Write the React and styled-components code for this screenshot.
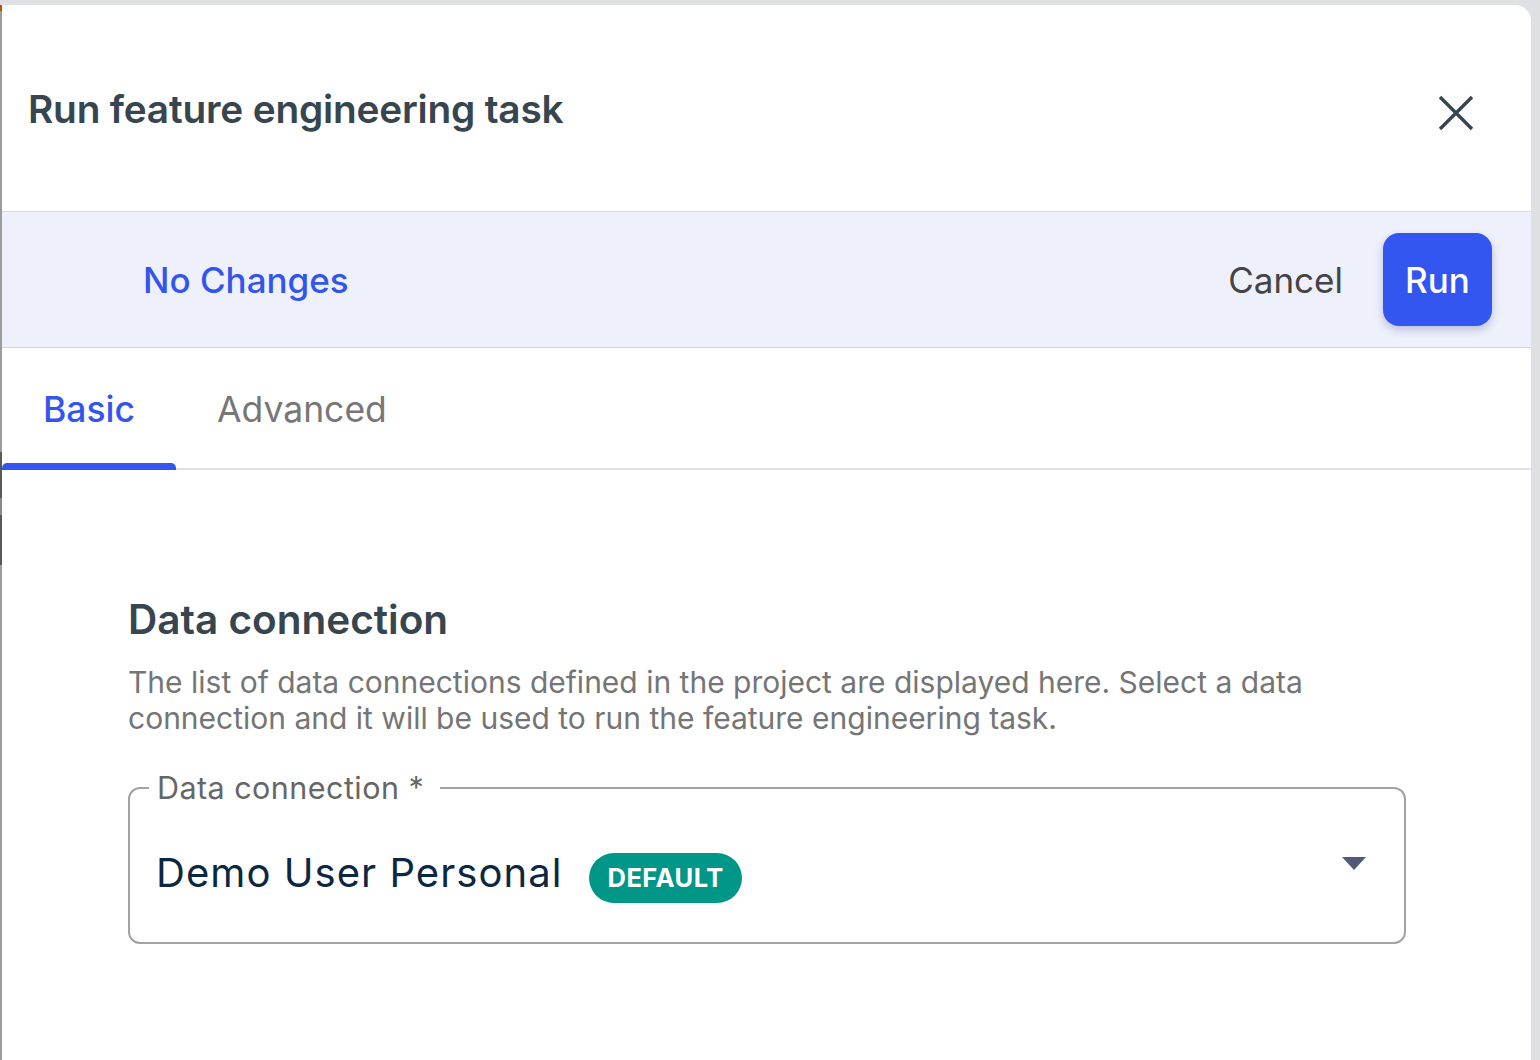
import React from "react";
import styled, { createGlobalStyle } from "styled-components";

const Global = createGlobalStyle`
  html, body { margin: 0; padding: 0; background: #dfe0e4; }
  body { font-family: Inter, "Noto Sans", sans-serif; }
  * { box-sizing: border-box; }
`;

const Frame = styled.div`
  display: flex;
  height: 1060px;
  overflow: hidden;
`;

const Rail = styled.div`
  width: 2px;
  flex: none;
  background: linear-gradient(
    to bottom,
    #dfe0e4 0 5px,
    #c4500f 5px 11px,
    #9b9b9b 11px 452px,
    #595959 452px 498px,
    #8a8a8a 498px 515px,
    #595959 515px 565px,
    #9b9b9b 565px
  );
`;

const Panel = styled.div`
  flex: 1;
  margin: 5px 9px 0 0;
  background: #fff;
  border-top-right-radius: 16px;
  display: flex;
  flex-direction: column;
`;

const Header = styled.header`
  height: 207px;
  display: flex;
  align-items: center;
  justify-content: space-between;
  padding: 0 55px 0 26px;
  border-bottom: 1px solid #dcdcdf;
`;

const Title = styled.h1`
  margin: 0;
  font-size: 38.8px;
  font-weight: 600;
  color: #37454f;
  letter-spacing: -0.2px;
`;

const CloseButton = styled.button`
  border: 0;
  background: none;
  padding: 0;
  width: 40px;
  height: 40px;
  margin-top: 10px;
  display: flex;
  align-items: center;
  justify-content: center;
  cursor: pointer;
  color: #37454f;
`;

const ActionBar = styled.div`
  height: 136px;
  background: #eef0fc;
  border-bottom: 1px solid #d0d3e0;
  display: flex;
  align-items: center;
  padding: 0 39px 0 141px;
`;

const StatusText = styled.span`
  font-size: 35px;
  font-weight: 500;
  color: #3355ee;
  flex: 1;
`;

const CancelButton = styled.button`
  border: 0;
  background: none;
  font-family: inherit;
  font-size: 35px;
  font-weight: 400;
  color: #444;
  padding: 0;
  margin-right: 40px;
  cursor: pointer;
`;

const RunButton = styled.button`
  border: 0;
  font-family: inherit;
  font-size: 35px;
  font-weight: 500;
  color: #fff;
  background: #3355f0;
  width: 109px;
  height: 93px;
  border-radius: 16px;
  box-shadow: 0 4px 8px rgba(40, 50, 120, 0.25);
  cursor: pointer;
`;

const Tabs = styled.div`
  height: 122px;
  display: flex;
  border-bottom: 2px solid #e2e2e2;
`;

const Tab = styled.div`
  position: relative;
  display: flex;
  align-items: center;
  padding: 2px 41px 0;
  font-size: 35.5px;
  font-weight: ${(p) => (p.$active ? 500 : 400)};
  color: ${(p) => (p.$active ? "#3355ee" : "#777")};
  &::after {
    content: "";
    display: ${(p) => (p.$active ? "block" : "none")};
    position: absolute;
    left: 0;
    right: 0;
    bottom: -2px;
    height: 7px;
    background: #3355f0;
    border-radius: 5px 5px 0 0;
  }
`;

const Content = styled.section`
  padding: 126px 125px 0 126px;
`;

const SectionTitle = styled.h2`
  margin: 0;
  font-size: 40.5px;
  font-weight: 600;
  color: #37454f;
  line-height: 48px;
`;

const Description = styled.p`
  margin: 20px 0 0;
  font-size: 30px;
  line-height: 36px;
  color: #757575;
  max-width: 1220px;
`;

const Field = styled.fieldset`
  margin: 42px 0 0;
  padding: 0 38px 0 28px;
  border: 2px solid #a3a3a3;
  border-radius: 12px;
  height: 166px;
  display: flex;
  align-items: center;
  min-width: 0;
`;

const Legend = styled.legend`
  font-size: 30.5px;
  color: #666;
  padding: 0 16px 0 8px;
  margin-left: -9px;
  letter-spacing: 0.45px;
  line-height: 20px;
`;

const Value = styled.div`
  flex: 1;
  display: flex;
  align-items: center;
  gap: 27px;
  margin-top: 5px;
`;

const ValueText = styled.span`
  font-size: 40px;
  color: #0b2742;
  letter-spacing: 1.05px;
  margin-left: -2px;
`;

const Badge = styled.span`
  background: #009688;
  color: #fff;
  font-size: 25.5px;
  font-weight: 700;
  letter-spacing: 0.5px;
  border-radius: 25px;
  height: 50px;
  padding: 0 18px;
  display: inline-flex;
  align-items: center;
  margin-top: 10px;
`;

const Caret = styled.svg`
  width: 24px;
  height: 13px;
  margin-top: -14px;
`;

export default function App() {
  return (
    <>
      <Global />
      <Frame>
        <Rail />
        <Panel>
          <Header>
            <Title>Run feature engineering task</Title>
            <CloseButton aria-label="Close">
              <svg width="36" height="36" viewBox="0 0 36 36">
                <path d="M2 2 L34 34 M34 2 L2 34" stroke="currentColor" strokeWidth="3.4" />
              </svg>
            </CloseButton>
          </Header>
          <ActionBar>
            <StatusText>No Changes</StatusText>
            <CancelButton>Cancel</CancelButton>
            <RunButton>Run</RunButton>
          </ActionBar>
          <Tabs>
            <Tab $active>Basic</Tab>
            <Tab>Advanced</Tab>
          </Tabs>
          <Content>
            <SectionTitle>Data connection</SectionTitle>
            <Description>
              The list of data connections defined in the project are displayed here. Select a data
              connection and it will be used to run the feature engineering task.
            </Description>
            <Field>
              <Legend>Data connection *</Legend>
              <Value>
                <ValueText>Demo User Personal</ValueText>
                <Badge>DEFAULT</Badge>
              </Value>
              <Caret viewBox="0 0 24 13">
                <path d="M0 0 H24 L12 13 Z" fill="#525a78" />
              </Caret>
            </Field>
          </Content>
        </Panel>
      </Frame>
    </>
  );
}
